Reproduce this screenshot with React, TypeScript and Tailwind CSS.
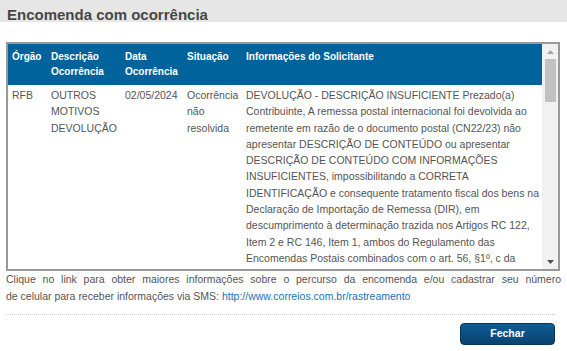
const INFO_LINES = [
  "DEVOLUÇÃO - DESCRIÇÃO INSUFICIENTE Prezado(a)",
  "Contribuinte, A remessa postal internacional foi devolvida ao",
  "remetente em razão de o documento postal (CN22/23) não",
  "apresentar DESCRIÇÃO DE CONTEÚDO ou apresentar",
  "DESCRIÇÃO DE CONTEÚDO COM INFORMAÇÕES",
  "INSUFICIENTES, impossibilitando a CORRETA",
  "IDENTIFICAÇÃO e consequente tratamento fiscal dos bens na",
  "Declaração de Importação de Remessa (DIR), em",
  "descumprimento à determinação trazida nos Artigos RC 122,",
  "Item 2 e RC 146, Item 1, ambos do Regulamento das",
  "Encomendas Postais combinados com o art. 56, §1º, c da",
  "Decreto-Lei nº 1.804/80.",
];

function Lines({ lines }: { lines: string[] }) {
  return (
    <>
      {lines.map((l, i) => (
        <div key={i} className="whitespace-nowrap">
          {l}
        </div>
      ))}
    </>
  );
}

function Scrollbar() {
  return (
    <div className="w-[16px] shrink-0 bg-[#f1f1f1] flex flex-col items-center">
      <div className="h-[15px] w-full flex items-center justify-center">
        <svg width="7" height="4" viewBox="0 0 7 4">
          <path d="M0 4 L3.5 0 L7 4 Z" fill="#a3a3a3" />
        </svg>
      </div>
      <div className="h-[43px] w-[11px] bg-[#c1c1c1]" />
      <div className="flex-1" />
      <div className="h-[15px] w-full flex items-center justify-center">
        <svg width="7" height="4" viewBox="0 0 7 4">
          <path d="M0 0 L7 0 L3.5 4 Z" fill="#505050" />
        </svg>
      </div>
    </div>
  );
}

export default function App() {
  return (
    <div className="w-[567px] h-[351px] overflow-hidden bg-white font-['Liberation_Sans',Arial,sans-serif] text-[#555]">
      <div className="h-[22px] bg-[#e6e6e6] pl-[7px] pt-[7px] text-[15px] leading-[15px] font-bold text-[#474747]">
        Encomenda com ocorrência
      </div>

      <div className="mt-[20px] ml-[6px] mr-[7px] h-[229px] border-2 border-[#999] flex">
        <div className="flex-1 overflow-hidden">
          <table className="w-full table-fixed border-collapse text-[10.5px]">
            <colgroup>
              <col className="w-[38px]" />
              <col className="w-[74px]" />
              <col className="w-[62px]" />
              <col className="w-[59px]" />
              <col />
            </colgroup>
            <thead>
              <tr className="bg-[#00639c] text-white text-[10px] leading-[15px] align-top text-left">
                <th className="pl-[4px] pt-[5px] pb-[6px] font-bold">Órgão</th>
                <th className="pl-[5px] pt-[5px] pb-[6px] font-bold">
                  Descrição
                  <br />
                  Ocorrência
                </th>
                <th className="pl-[5px] pt-[5px] pb-[6px] font-bold">
                  Data
                  <br />
                  Ocorrência
                </th>
                <th className="pl-[5px] pt-[5px] pb-[6px] font-bold">Situação</th>
                <th className="pl-[5px] pt-[5px] pb-[6px] font-bold">
                  Informações do Solicitante
                </th>
              </tr>
            </thead>
            <tbody>
              <tr className="align-top leading-[16.3px]">
                <td className="pl-[4px] pt-[2px]">RFB</td>
                <td className="pl-[5px] pt-[2px]">
                  <Lines lines={["OUTROS", "MOTIVOS", "DEVOLUÇÃO"]} />
                </td>
                <td className="pl-[5px] pt-[2px] whitespace-nowrap">02/05/2024</td>
                <td className="pl-[5px] pt-[2px]">
                  <Lines lines={["Ocorrência", "não", "resolvida"]} />
                </td>
                <td className="pl-[5px] pt-[2px]">
                  <Lines lines={INFO_LINES} />
                </td>
              </tr>
            </tbody>
          </table>
        </div>
        <Scrollbar />
      </div>

      <div className="mx-[6px] text-[10.5px] leading-[17px] text-[#555]">
        <div className="text-justify [text-align-last:justify]">
          Clique no link para obter maiores informações sobre o percurso da encomenda e/ou cadastrar seu número
        </div>
        <div>
          de celular para receber informações via SMS:{" "}
          <a href="#" className="text-[#1a72b8]">
            http://www.correios.com.br/rastreamento
          </a>
        </div>
      </div>

      <div className="mt-[9px] ml-[6px] mr-[12px] border-t border-dotted border-[#c8c8c8]" />

      <div className="flex justify-end pr-[12px] mt-[8px]">
        <button className="w-[95px] h-[22px] rounded-[4px] border border-[#06365c] bg-gradient-to-b from-[#0f5d96] to-[#0a426f] text-white text-[10.5px] font-bold">
          Fechar
        </button>
      </div>
    </div>
  );
}
